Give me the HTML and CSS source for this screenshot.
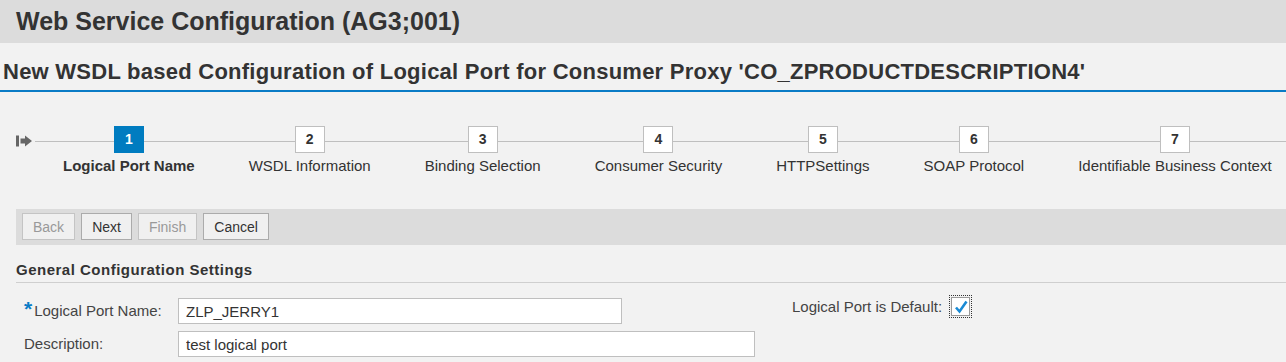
FILE: index.html
```html
<!DOCTYPE html>
<html lang="en">

<head>
  <meta charset="UTF-8">
  <title>Web Service Configuration</title>
  <link rel="stylesheet" href="styles.css">
</head>

<body>
  <div class="shell-header">Web Service Configuration (AG3;001)</div>
  <div class="page-title">New WSDL based Configuration of Logical Port for Consumer Proxy 'CO_ZPRODUCTDESCRIPTION4'</div>

  <div class="roadmap">
    <svg class="roadmap-start" width="17" height="12" viewBox="0 0 17 12">
      <rect x="0" y="0.5" width="3" height="11" fill="#666"/>
      <polygon points="4.5,3.5 9,3.5 9,0.5 16,6 9,11.5 9,8.5 4.5,8.5" fill="#666"/>
    </svg>
    <div class="roadmap-steps">
      <div class="step active"><div class="step-box">1</div><div class="step-label">Logical Port Name</div></div>
      <div class="step"><div class="step-box">2</div><div class="step-label">WSDL Information</div></div>
      <div class="step"><div class="step-box">3</div><div class="step-label">Binding Selection</div></div>
      <div class="step"><div class="step-box">4</div><div class="step-label">Consumer Security</div></div>
      <div class="step"><div class="step-box">5</div><div class="step-label">HTTPSettings</div></div>
      <div class="step"><div class="step-box">6</div><div class="step-label">SOAP Protocol</div></div>
      <div class="step"><div class="step-box">7</div><div class="step-label">Identifiable Business Context</div></div>
    </div>
  </div>

  <div class="toolbar">
    <button type="button" disabled>Back</button>
    <button type="button">Next</button>
    <button type="button" disabled>Finish</button>
    <button type="button">Cancel</button>
  </div>

  <div class="section-title">General Configuration Settings</div>

  <div class="form">
    <div class="form-row">
      <label class="form-label" for="port_name"><span class="required">*</span>Logical Port Name:</label>
      <input type="text" id="port_name" class="input-short" value="ZLP_JERRY1">
      <span class="default-label">Logical Port is Default:</span>
      <span class="checkbox">
        <svg width="16" height="16" viewBox="0 0 16 16">
          <path d="M3 8.5 L6.5 12.5 L13.5 2.5" fill="none" stroke="#1a8ad4" stroke-width="2.6"/>
        </svg>
      </span>
    </div>
    <div class="form-row">
      <label class="form-label" for="description">Description:</label>
      <input type="text" id="description" class="input-long" value="test logical port">
    </div>
  </div>
</body>

</html>
```

FILE: styles.css
```css
body {
  margin: 0;
  background-color: #f2f2f2;
  font-family: "Liberation Sans", Arial, sans-serif;
  color: #333;
}

.shell-header {
  height: 43px;
  line-height: 43px;
  padding-left: 16px;
  background-color: #dcdcdc;
  font-size: 25px;
  font-weight: bold;
}

.page-title {
  height: 47px;
  line-height: 58px;
  padding-left: 3px;
  font-size: 22px;
  font-weight: bold;
  letter-spacing: 0.25px;
  border-bottom: 2px solid #0a7cc6;
  white-space: nowrap;
}

.roadmap {
  display: flex;
  height: 83px;
  margin-top: 34px;
  padding-left: 16px;
  overflow: hidden;
}

.roadmap-start {
  flex-shrink: 0;
  margin-top: 9px;
}

.roadmap-steps {
  flex: 1;
  display: flex;
  align-items: flex-start;
  margin-left: 2px;
  padding-left: 1px;
  background: linear-gradient(#bfbfbf, #bfbfbf) no-repeat 0 15px;
  background-size: 100% 1px;
}

.step {
  display: flex;
  flex-direction: column;
  align-items: center;
  flex-shrink: 0;
  padding: 0 27px;
}

.step-box {
  width: 28px;
  height: 25px;
  line-height: 24px;
  border: 1px solid #bfbfbf;
  background-color: #fff;
  text-align: center;
  font-size: 14px;
  font-weight: bold;
}

.step-label {
  margin-top: 4px;
  font-size: 15px;
  line-height: 17px;
  white-space: nowrap;
}

.step.active .step-box {
  background-color: #007cc0;
  border-color: #007cc0;
  color: #fff;
}

.step.active .step-label {
  font-weight: bold;
}

.toolbar {
  display: flex;
  gap: 6px;
  height: 36px;
  margin-left: 16px;
  padding: 4px 6px;
  box-sizing: border-box;
  background-color: #dcdcdc;
}

.toolbar button {
  height: 27px;
  padding: 0 10px;
  border: 1px solid #ababab;
  border-radius: 0;
  background-color: #f0f0f0;
  color: #333;
  font-family: "Liberation Sans", Arial, sans-serif;
  font-size: 14px;
}

.toolbar button:disabled {
  color: #999;
  border-color: #c4c4c4;
}

.section-title {
  height: 38px;
  line-height: 16px;
  padding-top: 17px;
  box-sizing: border-box;
  margin-left: 16px;
  font-size: 15px;
  font-weight: bold;
  letter-spacing: 0.5px;
  border-bottom: 1px solid #cfcfcf;
}

.form {
  display: flex;
  flex-direction: column;
  gap: 7px;
  margin-top: 15px;
  padding-left: 24px;
}

.form-row {
  display: flex;
  align-items: flex-start;
}

.form-label {
  width: 154px;
  line-height: 26px;
  font-size: 15px;
  color: #444;
  white-space: nowrap;
}

.required {
  color: #0a7cc6;
  font-weight: bold;
  font-size: 21px;
  line-height: 20px;
  margin-right: 2px;
}

.form-row input {
  height: 26px;
  padding: 0 7px;
  border: 1px solid #bfbfbf;
  box-sizing: border-box;
  background-color: #fff;
  font-family: "Liberation Sans", Arial, sans-serif;
  font-size: 15px;
  color: #333;
}

.input-short {
  width: 444px;
}

.input-long {
  width: 577px;
}

.default-label {
  margin-left: 170px;
  line-height: 18px;
  font-size: 15px;
  color: #444;
}

.checkbox {
  display: flex;
  align-items: center;
  justify-content: center;
  width: 17px;
  height: 17px;
  margin-left: 9px;
  margin-top: -1px;
  border: 1px solid #9a9a9a;
  background-color: #fff;
  outline: 1px dotted #333;
  outline-offset: 1px;
}
```
